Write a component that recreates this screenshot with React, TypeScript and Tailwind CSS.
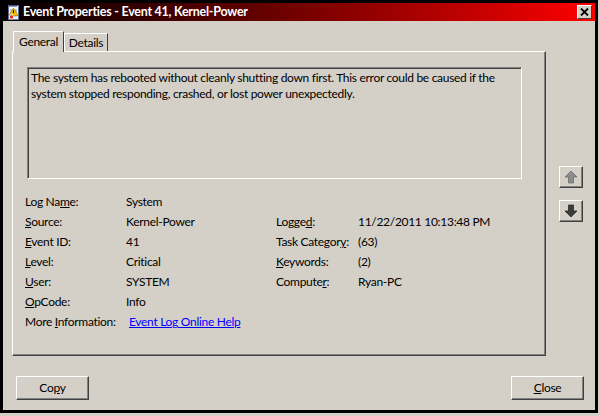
import React from 'react';

const ui = "font-['Segoe_UI','Lato',sans-serif]";

type Acc = [string, string, string];

const Key: React.FC<{ parts: Acc }> = ({ parts }) => (
    <>
        {parts[0]}
        <span className="underline">{parts[1]}</span>
        {parts[2]}
    </>
);

const rows: { label: Acc; value: React.ReactNode; label2?: Acc; value2?: string }[] = [
    { label: ['Log Na', 'm', 'e:'], value: 'System' },
    { label: ['', 'S', 'ource:'], value: 'Kernel-Power', label2: ['Logge', 'd', ':'], value2: '11/22/2011 10:13:48 PM' },
    { label: ['', 'E', 'vent ID:'], value: '41', label2: ['Task Categor', 'y', ':'], value2: '(63)' },
    { label: ['', 'L', 'evel:'], value: 'Critical', label2: ['', 'K', 'eywords:'], value2: '(2)' },
    { label: ['', 'U', 'ser:'], value: 'SYSTEM', label2: ['Compute', 'r', ':'], value2: 'Ryan-PC' },
    { label: ['', 'O', 'pCode:'], value: 'Info' },
    {
        label: ['More ', 'I', 'nformation:'],
        value: <span className="ml-[3px] text-[#0000ff] underline">Event Log Online Help</span>,
    },
];

const TitleIcon = () => (
    <svg width="13" height="16" viewBox="0 0 13 16">
        <rect x="1.5" y="1.5" width="10" height="14" fill="#f4f6fb" stroke="#5b6f9c" />
        <path d="M3 1v2M5 1v2M7 1v2M9 1v2" stroke="#283a78" strokeWidth="1" />
        <path d="M3 6h7M3 8h7M3 10h7M3 12h7" stroke="#7c94cc" strokeWidth="1" />
        <path d="M6.5 4 L11 11.5 H2 Z" fill="#f5c400" stroke="#a67800" strokeWidth="0.6" />
        <path d="M6.5 6.2v3" stroke="#000" strokeWidth="1.1" />
        <circle cx="4.5" cy="13" r="2.2" fill="#e03020" stroke="#fff" strokeWidth="0.8" />
    </svg>
);

const Arrow: React.FC<{ down?: boolean }> = ({ down }) => (
    <svg width="14" height="14" viewBox="0 0 14 14" className={down ? 'rotate-180' : ''}>
        <path
            d="M7 1 L13 7 H9.5 V13 H4.5 V7 H1 Z"
            fill={down ? '#3c3c3c' : '#8c8c8c'}
            stroke={down ? '#2a2a2a' : '#6c6c6c'}
            strokeWidth="0.8"
        />
    </svg>
);

const Btn: React.FC<{ children: React.ReactNode }> = ({ children }) => (
    <div className="flex h-[24px] w-[73px] items-center justify-center border border-t-white border-l-white border-r-[#404040] border-b-[#404040] bg-[#d4d0c8] text-[12px] text-black shadow-[inset_-1px_-1px_#808080]">
        {children}
    </div>
);

export default function App() {
    return (
        <div className={`h-[416px] w-[600px] overflow-hidden bg-[#d4d0c8] tracking-[-0.3px] ${ui}`}>
            <div className="flex h-[413px] w-[598px] flex-col border-[3px] border-black bg-[#d4d0c8]">
                {/* title bar */}
                <div className="flex h-[18px] shrink-0 items-center bg-linear-to-r from-[#060000] to-[#ff0000] pl-[4px] pr-[3px]">
                    <TitleIcon />
                    <span className="ml-[3px] text-[12.5px] font-bold leading-none tracking-[-0.25px] text-white">
                        Event Properties - Event 41, Kernel-Power
                    </span>
                    <div className="ml-auto flex h-[14px] w-[15px] items-center justify-center border border-t-white border-l-white border-r-[#404040] border-b-[#404040] bg-[#d4d0c8]">
                        <svg width="9" height="8" viewBox="0 0 9 8">
                            <path d="M1 0.5 L8 7.5 M8 0.5 L1 7.5" stroke="#000" strokeWidth="1.8" />
                        </svg>
                    </div>
                </div>

                <div className="flex pl-[9px]">
                    {/* tab control */}
                    <div className="mt-[10px] w-[534px]">
                        <div className="flex h-[20px] items-end pl-[1px] text-[12px] text-black">
                            <div className="relative z-10 -mb-[1px] flex h-[21px] w-[51px] items-start justify-center border border-b-0 border-t-white border-l-white border-r-[#404040] bg-[#d4d0c8] pt-[2px] leading-[15px]">
                                General
                            </div>
                            <div className="flex h-[18px] w-[44px] items-start justify-center border border-b-0 border-t-white border-l-white border-r-[#404040] bg-[#d4d0c8] pt-[1px] leading-[15px]">
                                Details
                            </div>
                        </div>
                        <div className="h-[305px] border border-t-white border-l-white border-r-[#404040] border-b-[#404040] shadow-[inset_-1px_-1px_#808080]">
                            <div className="ml-[14px] mt-[15px] h-[112px] w-[495px] whitespace-nowrap border border-t-[#808080] border-l-[#808080] border-r-white border-b-white shadow-[inset_1px_1px_#404040] px-[3px] pt-[2px] text-[12px] leading-[16px] text-black">
                                The system has rebooted without cleanly shutting down first. This error could be caused if the
                                <br />
                                system stopped responding, crashed, or lost power unexpectedly.
                            </div>
                            <div className="ml-[12px] mt-[13px] text-[12px] text-black">
                                {rows.map((r, i) => (
                                    <div key={i} className="flex h-[20px] items-center whitespace-nowrap">
                                        <div className="w-[101px]">
                                            <Key parts={r.label} />
                                        </div>
                                        <div className="w-[150px]">{r.value}</div>
                                        <div className="w-[82px]">{r.label2 && <Key parts={r.label2} />}</div>
                                        <div>{r.value2}</div>
                                    </div>
                                ))}
                            </div>
                        </div>
                    </div>

                    {/* navigation arrows */}
                    <div className="ml-[13px] mt-[145px] flex flex-col gap-[12px]">
                        <div className="flex h-[22px] w-[24px] items-center justify-center border border-t-white border-l-white border-r-[#404040] border-b-[#404040] bg-[#d4d0c8] shadow-[inset_-1px_-1px_#808080]">
                            <Arrow />
                        </div>
                        <div className="flex h-[22px] w-[24px] items-center justify-center border border-t-white border-l-white border-r-[#404040] border-b-[#404040] bg-[#d4d0c8] shadow-[inset_-1px_-1px_#808080]">
                            <Arrow down />
                        </div>
                    </div>
                </div>

                {/* bottom buttons */}
                <div className="mt-[20px] flex justify-between pl-[13px] pr-[11px]">
                    <Btn>
                        Co<span className="underline">p</span>y
                    </Btn>
                    <Btn>
                        <span className="underline">C</span>lose
                    </Btn>
                </div>
            </div>
        </div>
    );
}
